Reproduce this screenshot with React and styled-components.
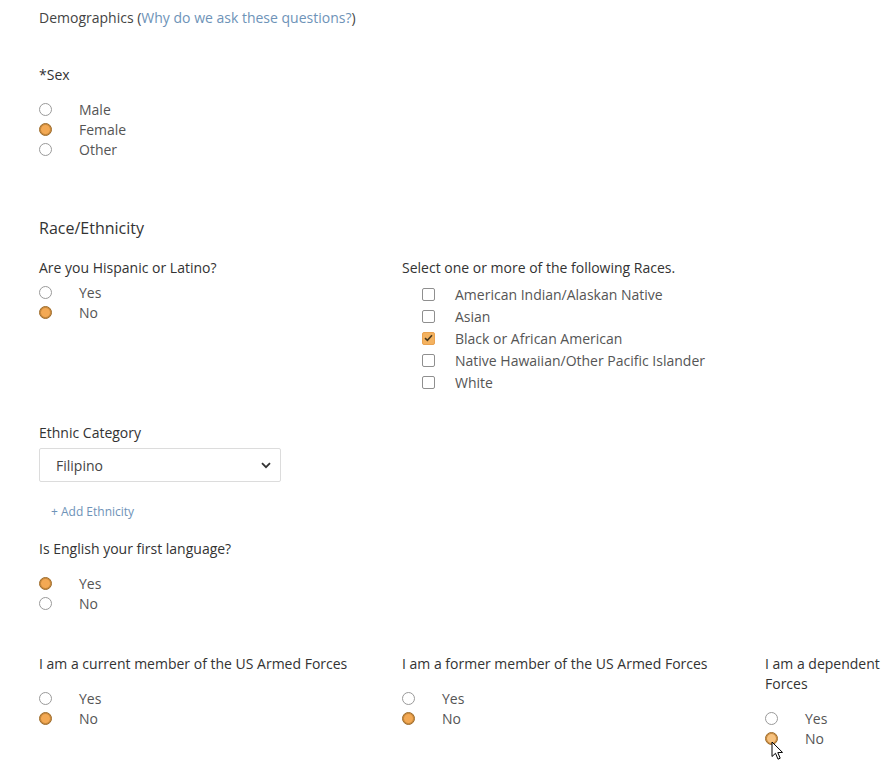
import React from "react";
import styled, { createGlobalStyle } from "styled-components";

const GlobalStyle = createGlobalStyle`
  html, body {
    margin: 0;
    padding: 0;
    background: #fff;
    overflow: hidden;
  }
  body {
    font-family: "Open Sans", "Liberation Sans", sans-serif;
    font-size: 14px;
    color: #444;
  }
`;

const Page = styled.div`
  padding: 8px 0 40px 39px;
  width: 1200px;
`;

const Intro = styled.div`
  line-height: 20px;
  color: #444;
`;

const Link = styled.a`
  color: #6e93b8;
  text-decoration: none;
`;

const Question = styled.div`
  line-height: 20px;
  color: #333;
  margin-top: ${(p) => p.$mt || 0}px;
`;

const Heading = styled.div`
  font-size: 16px;
  line-height: 22px;
  color: #333;
  margin-top: ${(p) => p.$mt || 0}px;
`;

const OptionList = styled.div`
  display: flex;
  flex-direction: column;
  margin-top: ${(p) => p.$mt || 0}px;
`;

const Option = styled.label`
  display: flex;
  align-items: center;
  height: 20px;
  color: #555;
`;

const Radio = styled.span`
  box-sizing: border-box;
  width: 13px;
  height: 13px;
  border-radius: 50%;
  border: 1px solid ${(p) => (p.$on ? "#9b6b2c" : "#9a9a9a")};
  background: ${(p) => (p.$on ? (p.$hover ? "#f7c27f" : "#f3a954") : "#fff")};
  box-shadow: ${(p) => (p.$on ? "inset 0 0 0 1px #c8883c" : "none")};
  margin-right: 27px;
  flex-shrink: 0;
`;

const CheckList = styled.div`
  display: flex;
  flex-direction: column;
  padding-left: 20px;
  margin-top: 5px;
`;

const CheckRow = styled.label`
  display: flex;
  align-items: center;
  height: 22px;
  color: #555;
`;

const Box = styled.span`
  box-sizing: border-box;
  width: 13px;
  height: 13px;
  border-radius: 2px;
  border: 1px solid ${(p) => (p.$on ? "#e9a250" : "#8f8f8f")};
  background: ${(p) => (p.$on ? "#f4b25f" : "#fff")};
  margin-right: 20px;
  display: flex;
  align-items: center;
  justify-content: center;
  flex-shrink: 0;
`;

const Columns = styled.div`
  display: grid;
  grid-template-columns: repeat(${(p) => p.$n}, 333px);
  column-gap: 30px;
  margin-top: ${(p) => p.$mt || 0}px;
`;

const Col = styled.div`
  position: relative;
`;

const Select = styled.div`
  box-sizing: border-box;
  margin-top: 5px;
  width: 242px;
  height: 34px;
  border: 1px solid #dcdcdc;
  border-radius: 2px;
  display: flex;
  align-items: center;
  justify-content: space-between;
  padding: 0 9px 0 16px;
  color: #444;
`;

const AddLink = styled.a`
  display: block;
  margin-top: 21px;
  padding-left: 12px;
  font-size: 12px;
  line-height: 18px;
  color: #6e93b8;
  text-decoration: none;
`;

const Cursor = styled.svg`
  position: absolute;
  left: 6px;
  top: 87px;
`;

const RadioGroup = ({ options, value, mt, hover }) => (
  <OptionList $mt={mt}>
    {options.map((o) => (
      <Option key={o}>
        <Radio $on={o === value} $hover={hover && o === value} />
        {o}
      </Option>
    ))}
  </OptionList>
);

const races = [
  "American Indian/Alaskan Native",
  "Asian",
  "Black or African American",
  "Native Hawaiian/Other Pacific Islander",
  "White",
];

export default function App() {
  return (
    <Page>
      <GlobalStyle />
      <Intro>
        Demographics (<Link href="#">Why do we ask these questions?</Link>)
      </Intro>

      <Question $mt={37}>*Sex</Question>
      <RadioGroup options={["Male", "Female", "Other"]} value="Female" mt={14} />

      <Heading $mt={58}>Race/Ethnicity</Heading>
      <Columns $n={2} $mt={19}>
        <Col>
          <Question>Are you Hispanic or Latino?</Question>
          <RadioGroup options={["Yes", "No"]} value="No" mt={4} />
        </Col>
        <Col>
          <Question>Select one or more of the following Races.</Question>
          <CheckList>
            {races.map((r) => {
              const on = r === "Black or African American";
              return (
                <CheckRow key={r}>
                  <Box $on={on}>
                    {on && (
                      <svg width="9" height="8" viewBox="0 0 9 8">
                        <path d="M1 4.2 L3.4 6.4 L8 1.2" fill="none" stroke="#4a3a20" strokeWidth="1.6" />
                      </svg>
                    )}
                  </Box>
                  {r}
                </CheckRow>
              );
            })}
          </CheckList>
        </Col>
      </Columns>

      <Question $mt={30}>Ethnic Category</Question>
      <Select>
        <span>Filipino</span>
        <svg width="10" height="7" viewBox="0 0 10 7">
          <path d="M1 1.2 L5 5.2 L9 1.2" fill="none" stroke="#333" strokeWidth="1.8" />
        </svg>
      </Select>
      <AddLink href="#">+ Add Ethnicity</AddLink>

      <Question $mt={18}>Is English your first language?</Question>
      <RadioGroup options={["Yes", "No"]} value="Yes" mt={14} />

      <Columns $n={3} $mt={41}>
        <Col>
          <Question>I am a current member of the US Armed Forces</Question>
          <RadioGroup options={["Yes", "No"]} value="No" mt={14} />
        </Col>
        <Col>
          <Question>I am a former member of the US Armed Forces</Question>
          <RadioGroup options={["Yes", "No"]} value="No" mt={14} />
        </Col>
        <Col>
          <Question>I am a dependent of a member of the US Armed Forces</Question>
          <RadioGroup options={["Yes", "No"]} value="No" mt={14} hover />
          <Cursor width="13" height="20" viewBox="0 0 13 20">
            <path d="M1 1 L1 15.5 L4.5 12.3 L7 18.2 L9.2 17.2 L6.8 11.6 L11.5 11.4 Z" fill="#fff" stroke="#000" strokeWidth="1" strokeLinejoin="round" />
          </Cursor>
        </Col>
      </Columns>
    </Page>
  );
}
